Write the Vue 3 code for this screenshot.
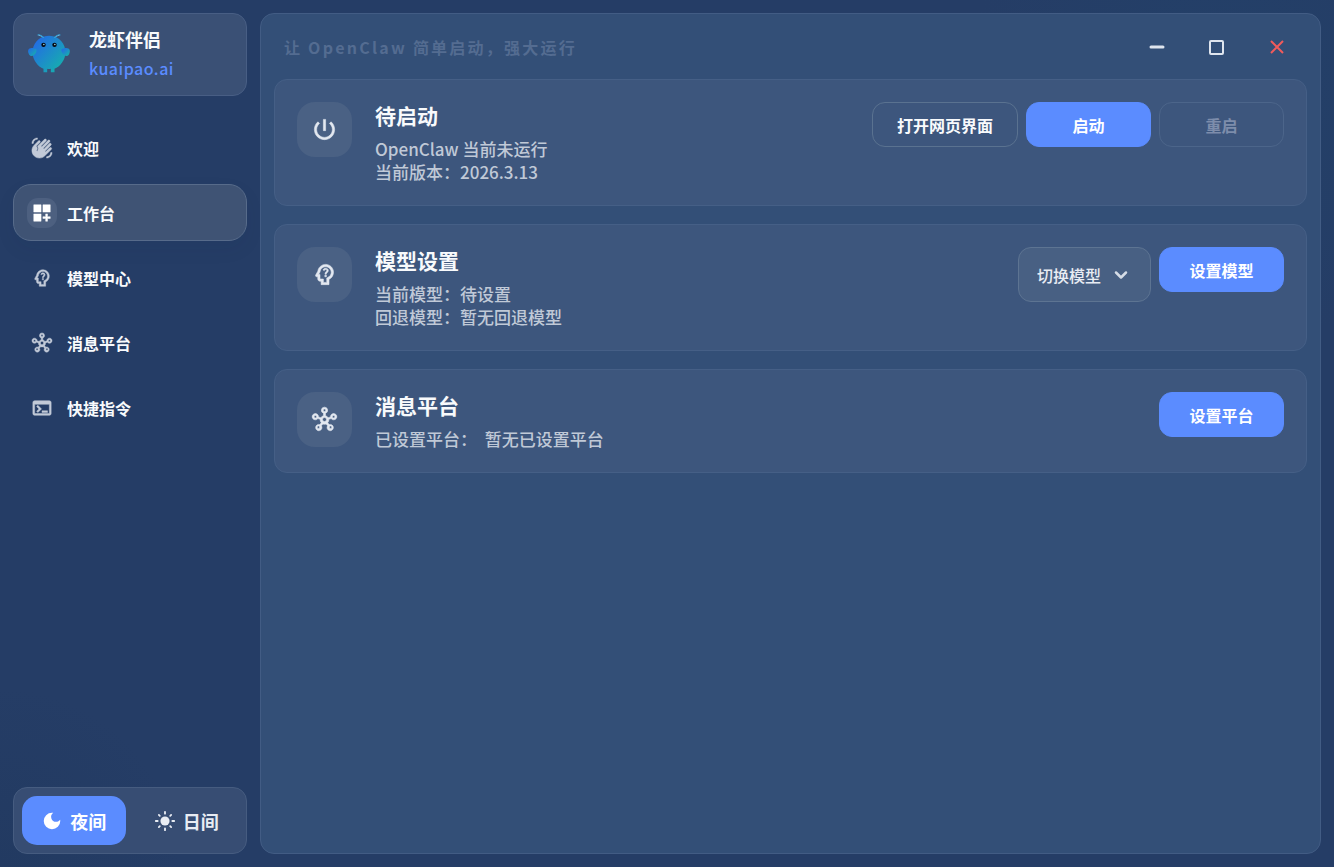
<template>
  <div class="app-shell">
    <aside class="sidebar">
      <div class="brand">
        <svg class="brand-logo" viewBox="0 0 120 120" fill="none" aria-hidden="true">
          <defs>
            <linearGradient id="lobster" x1="0%" y1="0%" x2="100%" y2="100%">
              <stop offset="0%" stop-color="#2563eb" />
              <stop offset="100%" stop-color="#14b8a6" />
            </linearGradient>
          </defs>
          <path fill="url(#lobster)" d="M60 10C30 10 15 35 15 55C15 75 30 95 45 100L45 110L55 110L55 100C55 100 60 102 65 100L65 110L75 110L75 100C90 95 105 75 105 55C105 35 90 10 60 10Z" />
          <path fill="url(#lobster)" d="M20 45C5 40 0 50 5 60C10 70 20 65 25 55C28 48 25 45 20 45Z" />
          <path fill="url(#lobster)" d="M100 45C115 40 120 50 115 60C110 70 100 65 95 55C92 48 95 45 100 45Z" />
          <path d="M45 15Q35 5 30 8M75 15Q85 5 90 8" stroke="#2f9fd6" stroke-width="3" stroke-linecap="round" />
          <circle cx="45" cy="35" r="6" fill="#050810" />
          <circle cx="75" cy="35" r="6" fill="#050810" />
          <circle cx="46" cy="34" r="2" fill="#a7e8f0" />
          <circle cx="76" cy="34" r="2" fill="#a7e8f0" />
        </svg>
        <div class="brand-text">
          <strong>龙虾伴侣</strong>
          <a href="#">kuaipao.ai</a>
        </div>
      </div>

      <nav class="nav">
        <button
          v-for="item in navItems"
          :key="item.id"
          type="button"
          class="nav-item"
          :class="{ active: item.id === activePage }"
          @click="activePage = item.id"
        >
          <span class="nav-icon">
            <svg viewBox="0 0 24 24" aria-hidden="true"><path :d="item.icon" /></svg>
          </span>
          <span>{{ item.label }}</span>
        </button>
      </nav>

      <div class="theme-switch">
        <button type="button" :class="{ active: theme === 'dark' }" @click="theme = 'dark'">
          <svg viewBox="0 0 24 24" aria-hidden="true">
            <path d="M12 3a9 9 0 1 0 9 9c0-.46-.04-.92-.1-1.36-.98 1.37-2.58 2.26-4.4 2.26a5.4 5.4 0 0 1-3.14-9.8c-.44-.06-.9-.1-1.36-.1z" />
          </svg>
          <span>夜间</span>
        </button>
        <button type="button" :class="{ active: theme === 'light' }" @click="theme = 'light'">
          <svg viewBox="0 0 24 24" aria-hidden="true">
            <circle cx="12" cy="12" r="5" />
            <path class="rays" d="M12 2v2M12 20v2M2 12h2M20 12h2M5.3 5.3l1 1M17.7 17.7l1 1M18.7 5.3l-1 1M6.3 17.7l-1 1" />
          </svg>
          <span>日间</span>
        </button>
      </div>
    </aside>

    <main class="main">
      <header class="titlebar">
        <p class="slogan">让 OpenClaw 简单启动，强大运行</p>
        <div class="window-controls">
          <button type="button" aria-label="最小化">
            <svg viewBox="0 0 20 20"><path d="M4 10h12" stroke-width="3" stroke-linecap="round" /></svg>
          </button>
          <button type="button" aria-label="最大化">
            <svg viewBox="0 0 20 20"><rect x="3" y="4" width="13" height="13" rx="1" stroke-width="2" /></svg>
          </button>
          <button type="button" class="close" aria-label="关闭">
            <svg viewBox="0 0 20 20"><path d="M4 4l12 12M16 4L4 16" stroke-width="2" /></svg>
          </button>
        </div>
      </header>

      <div class="cards">
        <section v-for="card in cards" :key="card.title" class="card">
          <div class="card-icon">
            <svg viewBox="0 0 24 24" aria-hidden="true"><path :d="card.icon" /></svg>
          </div>
          <div class="card-body">
            <h2>{{ card.title }}</h2>
            <p v-for="line in card.lines" :key="line">{{ line }}</p>
          </div>
          <div class="card-actions">
            <div v-if="card.models" class="model-select">
              <select v-model="model" aria-label="切换模型">
                <option value="">切换模型</option>
              </select>
              <svg viewBox="0 0 24 24" aria-hidden="true"><path d="M6 9l6 6l6-6" /></svg>
            </div>
            <button
              v-for="action in card.actions"
              :key="action.label"
              type="button"
              class="btn"
              :class="{ primary: action.primary }"
              :disabled="action.disabled"
            >
              {{ action.label }}
            </button>
          </div>
        </section>
      </div>
    </main>
  </div>
</template>

<script setup>
import { ref } from 'vue';

const icons = {
  wave: 'M23 17c0 3.31-2.69 6-6 6v-1.5c2.48 0 4.5-2.02 4.5-4.5H23zM1 7c0-3.31 2.69-6 6-6v1.5C4.52 2.5 2.5 4.52 2.5 7H1zM8.01 4.32l-4.6 4.6c-3.22 3.22-3.22 8.45 0 11.67s8.45 3.22 11.67 0l7.07-7.07c.49-.49.49-1.28 0-1.77s-1.28-.49-1.77 0l-4.42 4.42-.71-.71 6.54-6.54c.49-.49.49-1.28 0-1.77s-1.28-.49-1.77 0l-5.83 5.83-.71-.71 6.89-6.89c.49-.49.49-1.28 0-1.77s-1.28-.49-1.77 0l-6.89 6.89-.71-.71 5.48-5.48c.49-.49.49-1.28 0-1.77s-1.28-.49-1.77 0l-7.62 7.62c1.22 1.57 1.11 3.84-.33 5.28l-.71-.71c1.17-1.17 1.17-3.07 0-4.24l-.35-.35 4.07-4.07c.49-.49.49-1.28 0-1.77-.48-.48-1.27-.48-1.76.01z',
  dashboard: 'M3 3h8v8H3zM13 3h8v8h-8zM3 13h8v8H3zM18 13h-2v3h-3v2h3v3h2v-3h3v-2h-3z',
  model: 'M19.94 9.06c-.43-3.27-3.23-5.86-6.53-6.05C13.27 3 13.14 3 13 3 9.47 3 6.57 5.61 6.08 9l-1.93 3.48C3.74 13.14 4.22 14 5 14h1v2c0 1.1.9 2 2 2h1v3h7v-4.68c2.62-1.25 4.35-4.08 3.94-7.26zM14.89 14.63L14 15.05V19h-3v-3H8v-4H6.7l1.33-2.33C8.21 7.06 10.35 5 13 5c2.76 0 5 2.24 5 5 0 2.09-1.29 3.88-3.11 4.63zM12.3 12.6h1.4v1.4h-1.4zM13 6.4c-1.1 0-1.9.6-2.3 1.6l1.1.5c.2-.5.6-.9 1.2-.9s1.1.4 1.1.9c0 .9-1.7 1.2-1.7 3.2h1.2c0-1.2 1.8-1.5 1.8-3.2 0-1.2-1-2.1-2.4-2.1z',
  hub: 'M12 1a2.8 2.8 0 0 0-.9 5.45v2.2a3.5 3.5 0 0 0-2.35 1.72l-2.1-.7a2.8 2.8 0 1 0-.55 1.5l2.1.7a3.5 3.5 0 0 0 .95 3l-1.3 1.65a2.8 2.8 0 1 0 1.4 1.1l1.3-1.65a3.5 3.5 0 0 0 2.9 0l1.3 1.65a2.8 2.8 0 1 0 1.4-1.1l-1.3-1.65a3.5 3.5 0 0 0 .95-3l2.1-.7a2.8 2.8 0 1 0-.55-1.5l-2.1.7a3.5 3.5 0 0 0-2.35-1.72v-2.2A2.8 2.8 0 0 0 12 1zM12 2.7a1.1 1.1 0 1 1 0 2.2a1.1 1.1 0 0 1 0-2.2zM3.9 8.4a1.1 1.1 0 1 1 0 2.2a1.1 1.1 0 0 1 0-2.2zM20.1 8.4a1.1 1.1 0 1 1 0 2.2a1.1 1.1 0 0 1 0-2.2zM12 10.2a1.8 1.8 0 1 1 0 3.6a1.8 1.8 0 0 1 0-3.6zM6.6 17.7a1.1 1.1 0 1 1 0 2.2a1.1 1.1 0 0 1 0-2.2zM17.4 17.7a1.1 1.1 0 1 1 0 2.2a1.1 1.1 0 0 1 0-2.2z',
  terminal: 'M20 4H4c-1.11 0-2 .9-2 2v12c0 1.1.89 2 2 2h16c1.1 0 2-.9 2-2V6c0-1.1-.89-2-2-2zM20 18H4V8h16v10zM18 17h-6v-2h6v2zM7.5 17l-1.41-1.41L8.67 13l-2.59-2.59L7.5 9l4 4-4 4z',
  power: 'M13 3h-2v10h2V3zM17.83 5.17l-1.42 1.42C17.99 7.86 19 9.81 19 12c0 3.87-3.13 7-7 7s-7-3.13-7-7c0-2.19 1.01-4.14 2.58-5.42L6.17 5.17C4.23 6.82 3 9.26 3 12c0 4.97 4.03 9 9 9s9-4.03 9-9c0-2.74-1.23-5.18-3.17-6.83z'
};

const activePage = ref('workbench');
const theme = ref('dark');
const model = ref('');

const navItems = [
  { id: 'welcome', label: '欢迎', icon: icons.wave },
  { id: 'workbench', label: '工作台', icon: icons.dashboard },
  { id: 'models', label: '模型中心', icon: icons.model },
  { id: 'channels', label: '消息平台', icon: icons.hub },
  { id: 'commands', label: '快捷指令', icon: icons.terminal }
];

const cards = [
  {
    title: '待启动',
    icon: icons.power,
    lines: ['OpenClaw 当前未运行', '当前版本：2026.3.13'],
    actions: [
      { label: '打开网页界面' },
      { label: '启动', primary: true },
      { label: '重启', disabled: true }
    ]
  },
  {
    title: '模型设置',
    icon: icons.model,
    lines: ['当前模型：待设置', '回退模型：暂无回退模型'],
    models: true,
    actions: [{ label: '设置模型', primary: true }]
  },
  {
    title: '消息平台',
    icon: icons.hub,
    lines: ['已设置平台：\u00a0 暂无已设置平台'],
    actions: [{ label: '设置平台', primary: true }]
  }
];
</script>

<style>
body {
  margin: 0;
  background: #253d66;
}
</style>

<style scoped>
.app-shell {
  box-sizing: border-box;
  min-height: 100vh;
  padding: 13px;
  display: grid;
  grid-template-columns: 234px minmax(0, 1fr);
  gap: 13px;
  font-family: "Noto Sans CJK SC", sans-serif;
  font-size: 16px;
  color: #f8fafc;
  background:
    radial-gradient(circle at 0% 100%, rgba(32, 56, 94, 0.6), transparent 180px),
    radial-gradient(circle at 92% 10%, rgba(34, 66, 106, 0.6), transparent 260px),
    #253d66;
}

.app-shell * {
  box-sizing: border-box;
}

button,
select {
  font: inherit;
  color: inherit;
  margin: 0;
  cursor: pointer;
}

svg {
  display: block;
  flex-shrink: 0;
  fill: currentColor;
  fill-rule: evenodd;
}

.sidebar {
  display: flex;
  flex-direction: column;
}

.brand {
  display: flex;
  align-items: center;
  gap: 18px;
  height: 83px;
  padding: 0 13px 2px;
  border: 1px solid #485e84;
  border-radius: 14px;
  background: #3a5075;
}

.brand-logo {
  width: 44px;
  height: 44px;
}

.brand-text {
  display: flex;
  flex-direction: column;
  gap: 4px;
  line-height: 25px;
}

.brand-text strong {
  font-size: 18px;
  font-weight: 700;
}

.brand-text a {
  font-weight: 500;
  letter-spacing: 0.5px;
  color: #5b8cff;
  text-decoration: none;
}

.nav {
  display: flex;
  flex-direction: column;
  gap: 8px;
  margin-top: 23px;
}

.nav-item {
  display: flex;
  align-items: center;
  gap: 10px;
  height: 57px;
  padding: 0 13px;
  border: 1px solid transparent;
  border-radius: 18px;
  background: none;
  font-weight: 700;
  text-align: left;
}

.nav-item.active {
  border-color: #576b8a;
  background: #3f5374;
  box-shadow: 0 8px 20px rgba(20, 35, 65, 0.06);
}

.nav-icon {
  display: grid;
  place-items: center;
  width: 30px;
  height: 30px;
  border-radius: 11px;
  color: #c2cad8;
}

.nav-icon svg,
.theme-switch svg {
  width: 22px;
  height: 22px;
}

.nav-icon path,
.card-icon path {
  stroke: currentColor;
  stroke-width: 0.5;
}

.active .nav-icon {
  background: #4d6080;
  color: #ffffff;
}

.theme-switch {
  display: grid;
  grid-template-columns: 1fr 1fr;
  gap: 9px;
  margin-top: auto;
  padding: 8px;
  border: 1px solid #465c80;
  border-radius: 14px;
  background: #374d73;
}

.theme-switch button {
  display: flex;
  align-items: center;
  justify-content: center;
  gap: 7px;
  height: 49px;
  padding: 0;
  border: none;
  border-radius: 15px;
  background: none;
  font-size: 18px;
  font-weight: 700;
  color: #e8ecf3;
}

.theme-switch button.active {
  background: #5b8cff;
  color: #ffffff;
}

.rays {
  fill: none;
  stroke: currentColor;
  stroke-width: 2;
  stroke-linecap: round;
}

.main {
  border: 1px solid #425c84;
  border-radius: 14px;
  padding: 0 13px 13px;
  background: #334f77;
}

.titlebar {
  display: flex;
  align-items: center;
  justify-content: space-between;
  height: 65px;
  padding-left: 10px;
}

.slogan {
  margin: 0;
  font-weight: 700;
  letter-spacing: 0.14em;
  line-height: 24px;
  color: #546c91;
}

.window-controls {
  display: flex;
}

.window-controls button {
  display: grid;
  place-items: center;
  width: 60px;
  height: 44px;
  padding: 0;
  border: none;
  background: none;
  color: #dfe5ee;
}

.window-controls svg {
  width: 20px;
  height: 20px;
  fill: none;
  stroke: currentColor;
}

.window-controls .close {
  color: #f15b5b;
}

.cards {
  display: flex;
  flex-direction: column;
  gap: 18px;
}

.card {
  display: flex;
  align-items: flex-start;
  gap: 23px;
  padding: 22px;
  border: 1px solid #455f86;
  border-radius: 13px;
  background: #3d567d;
}

.card-icon {
  display: grid;
  place-items: center;
  width: 55px;
  height: 55px;
  border-radius: 18px;
  background: #4a6184;
  color: #e3e8f0;
}

.card-icon svg {
  width: 27px;
  height: 27px;
}

.card-body {
  flex: 1;
  min-width: 0;
}

.card-body h2 {
  margin: 0 0 8px;
  font-size: 21px;
  line-height: 27px;
  font-weight: 700;
}

.card-body p {
  margin: 0;
  font-size: 17px;
  line-height: 23px;
  font-weight: 500;
  color: #c0c9d7;
}

.card-actions {
  display: flex;
  align-items: flex-start;
  gap: 8px;
}

.btn {
  min-width: 125px;
  height: 45px;
  padding: 0 24px;
  border: 1px solid #5a7290;
  border-radius: 13px;
  background: transparent;
  font-weight: 700;
}

.btn.primary {
  border-color: #5b8cff;
  background: #5b8cff;
  color: #ffffff;
}

.btn:disabled {
  border-color: #4c658a;
  color: #7d8dab;
  cursor: default;
}

.model-select {
  position: relative;
}

.model-select select {
  appearance: none;
  width: 133px;
  height: 55px;
  padding: 0 40px 0 18px;
  border: 1px solid #5d7492;
  border-radius: 13px;
  background: #486083;
  font-weight: 500;
  color: #e8ecf3;
}

.model-select svg {
  position: absolute;
  top: 18px;
  right: 20px;
  width: 20px;
  height: 20px;
  fill: none;
  stroke: #d5dce6;
  stroke-width: 3;
  stroke-linecap: round;
  stroke-linejoin: round;
  pointer-events: none;
}
</style>
